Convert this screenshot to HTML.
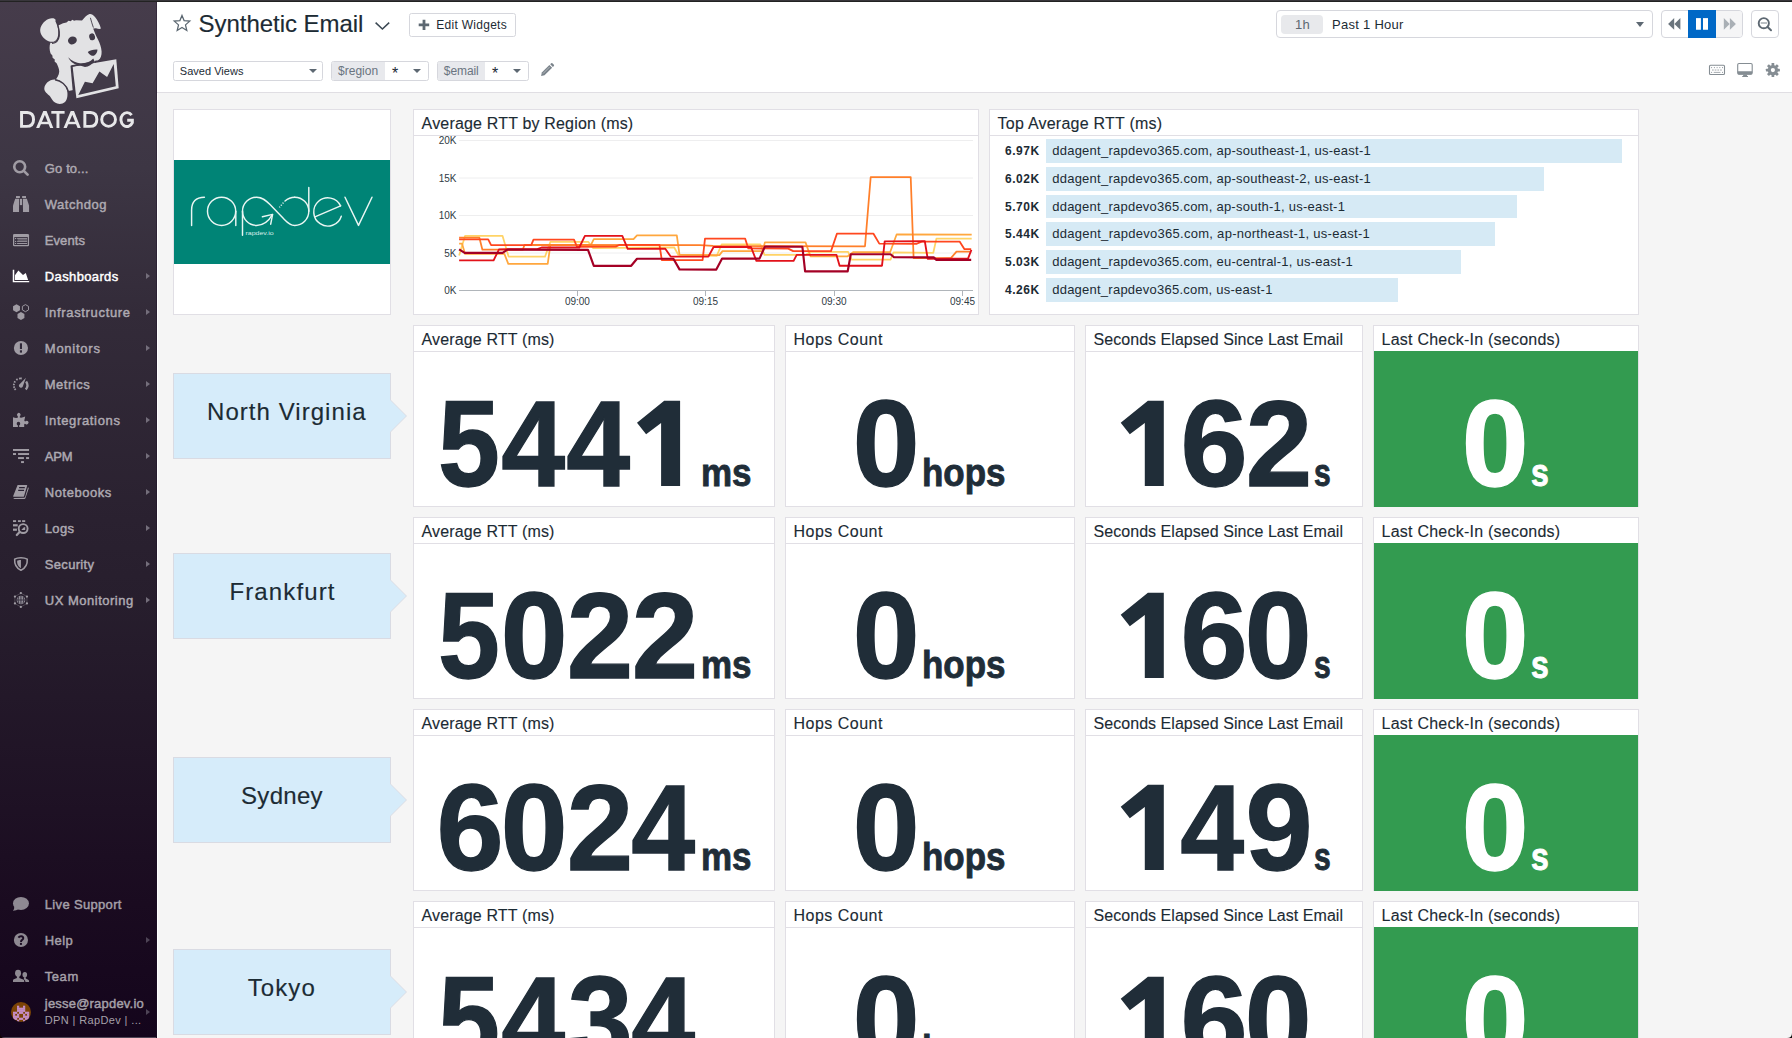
<!DOCTYPE html>
<html>
<head>
<meta charset="utf-8">
<title>Synthetic Email</title>
<style>
*{box-sizing:border-box;margin:0;padding:0}
html,body{width:1792px;height:1038px;overflow:hidden;background:#f5f5f5;font-family:"Liberation Sans",sans-serif;color:#1c2b34}
.abs{position:absolute}
.t{position:absolute;white-space:nowrap}
#strip{position:absolute;left:0;top:0;width:1792px;height:2px;background:linear-gradient(#38363b 0,#38363b 50%,#222 50%,#222 100%);z-index:10}
#side{position:absolute;left:0;top:2px;width:157px;height:1036px;background:linear-gradient(180deg,#463c4b 0%,#3d3644 16%,#332b39 30%,#2a2130 50%,#271e2d 58%,#1a0b20 87%,#14051c 100%);border-right:1px solid rgba(30,15,40,.4);overflow:hidden}
#hdr{position:absolute;left:157px;top:2px;width:1635px;height:91px;background:#fff;border-bottom:1px solid #e0dee3}
#ddtxt{left:19px;top:106px;font-size:23.4px;line-height:24px;font-weight:700;color:#e6e6e8;letter-spacing:-.75px;white-space:nowrap;transform:scaleX(1.057);transform-origin:0 0}
.nav{position:absolute;left:44.8px;font-size:13px;font-weight:400;-webkit-text-stroke:.45px currentColor;color:#aeaab2;white-space:nowrap;line-height:16px}
.nav.on{color:#fff}
.nav.lo{color:#a5a0a9}
.car{position:absolute;left:146px;width:0;height:0;border-left:4.2px solid #746e7b;border-top:3.2px solid transparent;border-bottom:3.2px solid transparent}
.car.lo{border-left-color:#4e4456}
.btn{background:#fff;border:1px solid #d6d7dd;border-radius:2.5px}
.tag{position:absolute;left:0;top:0;height:18px;background:#e8e9ed;border-radius:2px 0 0 2px}
.dd{position:absolute;width:0;height:0;border-left:4px solid transparent;border-right:4px solid transparent;border-top:4.6px solid #5d6872}
.w{position:absolute;background:#fff;border:1px solid #e1dfe5}
.tb{height:1px;background:#e1dfe5}
.ax{font-size:10px;line-height:10px;color:#2f3b45}
.big{font-weight:700}
.note{position:absolute;left:173px;width:218px;height:86px;background:#d6ecfa;border:1px solid #d9dbe3}
.note:before{content:"";position:absolute;left:216px;top:24.7px;border-left:17.2px solid #dcdde4;border-top:17.2px solid transparent;border-bottom:17.2px solid transparent}
.note:after{content:"";position:absolute;left:216px;top:25.7px;border-left:16.2px solid #d6ecfa;border-top:16.2px solid transparent;border-bottom:16.2px solid transparent}
.dg{width:65.1px;text-align:center;font-size:119px;line-height:119px;transform:scale(.97,1.042);transform-origin:50% 84.65%}

</style>
</head>
<body>
<div id="strip"></div>
<div id="side">
<svg class="abs" style="left:30px;top:6px" width="100" height="100" viewBox="0 0 100 100">
<g fill="#e2e2e4">
<!-- left ear -->
<path d="M22.5 10.2C18 9.8 12.5 14 10.6 19.5C9.2 24 11.5 28.5 15.5 31.5C18.5 33.8 22.5 34.6 25 33C27.8 31 28.6 27 28.2 22.5C27.9 18 26.6 13.5 25.4 11.5C24.6 10.4 23.6 10.2 22.5 10.2Z"/>
<!-- head + neck + body -->
<path d="M28.3 17.5L33 15.2L36.5 14.4L38.5 12.8L40.5 13.2L42.5 11.8L44 12.8L46 12.2L52 12.6C54 10 56.5 7.2 59 6.2C61 5.6 63 6.6 65 9C67.5 12 70 16.5 70.9 20.6C70 21.4 68 21 66 20.2L63.2 20.4C64.5 24 66 27.5 68 31.5C69.8 35 71.3 39 71.6 43.5C71.8 47.5 70.6 50.6 68.5 52C67.5 52.6 66.3 52.7 65.5 52.5L64.5 54.8L41.5 57.8L43.6 82L38.2 83C37 78 33 73.5 26 71.2C28.5 68 29.8 64.5 29 61.5C28.4 59 27.6 57 26.6 55.2L24.6 53.6L24.8 51.4L22.6 49.8L22.4 47.6L20.6 45.6C19.4 42 19.2 38 20.4 34.8C24 35.6 27.6 33.4 29 29.5C30 26 29.4 21 28.3 17.5Z"/>
<!-- paw -->
<path d="M14.3 80.5C14.6 76 19 71.8 24.5 71.6C30 71.6 35.5 76 37 82C38 86.5 37.5 91.5 35 94C32.5 96.4 28 96.6 25 94.6C22.5 93 21.4 90.4 19.8 88C17.6 85.8 14.2 84 14.3 80.5Z"/>
<!-- frame -->
<path d="M42.6 58.7L86.3 51.2L88.7 80.3L46.4 90.2Z"/>
</g>
<g fill="#413a48">
<ellipse cx="42.4" cy="32.4" rx="4.5" ry="3.9" transform="rotate(-22 42.4 32.4)"/>
<ellipse cx="62.1" cy="28.8" rx="2.9" ry="3.5" transform="rotate(-12 62.1 28.8)"/>
<path d="M57.8 44C59.5 42.2 64 41.2 67.4 41.5C67.6 43.6 66.6 45.8 64.6 47.2C63 48.2 61.2 47.6 59.8 46.4C58.8 45.6 58.1 44.8 57.8 44Z"/>
<!-- mouth -->
<path d="M38.2 49.2C41.5 52.8 46 55 51 55.5C55.5 55.7 60 53.8 63.3 50.4L64.4 53C62 56.6 58.6 58.9 55 59.1L50 57.6C45 57.2 40.4 54 38.2 49.2Z"/>
<!-- mountains -->
<path d="M48.3 86.9L54.9 73.7L62.6 75.2L69.4 63.6L77.1 68.9L83.7 56L85.8 78.2Z"/>
</g>
<!-- creases -->
<path d="M60.4 9.8C61.2 13 62.4 16.8 63.4 19.6" stroke="#413a48" stroke-width=".9" fill="none"/>
<path d="M25.8 12.4C28 17 29.6 23 29.2 28C28.7 32 25.8 35 22 35.4" stroke="#413a48" stroke-width="1.3" fill="none"/>
<path d="M25 71.7C31 72.6 36.6 77 38.4 83.5" stroke="#413a48" stroke-width="1.4" fill="none"/>
<path d="M41.3 57.6L43.6 84" stroke="#413a48" stroke-width="1.6" fill="none"/>
<path d="M41.5 57.9L66 53.7" stroke="#413a48" stroke-width="1.5" fill="none"/>
</svg>
<svg class="abs" style="left:14px;top:102px" width="126" height="30" viewBox="0 0 126 30">
<defs><clipPath id="ddc"><rect x="0" y="6.89" width="126" height="17.02"/></clipPath></defs>
<g fill="none" stroke="#e7e7e9" stroke-width="2.95" clip-path="url(#ddc)">
<path d="M7.56 8.44V22.36H12.3C17.4 22.36 19.55 19.4 19.55 15.4C19.55 11.4 17.4 8.44 12.3 8.44Z"/>
<path d="M22.9 25.9L30.94 6.9L38.5 25.9" stroke-linejoin="miter" stroke-miterlimit="10"/>
<path d="M26.4 19H35.6" stroke-width="2.4"/>
<path d="M37.3 8.3H50.6" stroke-width="2.8"/>
<path d="M43.95 7V24"/>
<path d="M50.3 25.9L58.37 6.9L65.9 25.9" stroke-linejoin="miter" stroke-miterlimit="10"/>
<path d="M53.8 19H63" stroke-width="2.4"/>
<path d="M70.85 8.44V22.36H75.6C80.7 22.36 82.84 19.4 82.84 15.4C82.84 11.4 80.7 8.44 75.6 8.44Z"/>
<ellipse cx="94.59" cy="15.4" rx="6.89" ry="6.96"/>
<path d="M117.6 11.2A6 6.96 0 1 0 118.35 18.6V16.3H113.2" stroke-linejoin="miter"/>
</g></svg>

<svg class="abs" style="left:8px;top:154px" width="26" height="24" viewBox="0 0 26 24"><circle cx="11.7" cy="10.75" r="5.45" fill="none" stroke="#a09ca4" stroke-width="2.6"/><path d="M15.8 14.9L19.6 18.6" stroke="#a09ca4" stroke-width="2.7" stroke-linecap="round"/></svg>
<div class="nav" style="top:159px;letter-spacing:0.128px">Go to...</div>
<svg class="abs" style="left:8px;top:190px" width="26" height="24" viewBox="0 0 26 24"><g fill="#a09ca4"><rect x="8" y="4.05" width="3.9" height="1.95"/><rect x="14.1" y="4.05" width="3.9" height="1.95"/><path d="M7.2 6.7H11.1L11 20H5V13.6Z"/><path d="M14.9 6.7H18.85L21.05 13.6V20H15Z"/><rect x="11.9" y="6.9" width="2.2" height="6.2"/></g></svg>
<div class="nav" style="top:195px;letter-spacing:0.525px">Watchdog</div>
<svg class="abs" style="left:8px;top:226px" width="26" height="24" viewBox="0 0 26 24"><rect x="5" y="5.9" width="16.05" height="12.4" rx="1.3" fill="#a09ca4"/><rect x="6.25" y="9.1" width="13.55" height="7.9" fill="#37303f"/><g fill="#a09ca4"><rect x="7" y="10" width="1.2" height="1.1"/><rect x="7" y="12.9" width="1.2" height="1.1"/><rect x="7" y="15" width="1.2" height="1"/><rect x="9.1" y="10" width="10" height="1" opacity=".8"/><rect x="9.6" y="11" width="9.5" height="1.9" opacity=".45"/><rect x="9.1" y="12.9" width="10" height="1.1" opacity=".8"/><rect x="9.1" y="15" width="10" height="1" opacity=".95"/></g></svg>
<div class="nav" style="top:231px;letter-spacing:0.078px">Events</div>
<svg class="abs" style="left:8px;top:262px" width="26" height="24" viewBox="0 0 26 24"><g fill="#fff"><path d="M4.75 5.8H6.25V16.9H21.2V18.2H4.75Z"/><path d="M6.95 15.95V11.3L10.4 6.5L15 11.1L17.8 8.9L20.1 15.95Z"/></g></svg>
<div class="nav on" style="top:267px;letter-spacing:0.37px">Dashboards</div>
<div class="car" style="top:270.8px"></div>
<svg class="abs" style="left:8px;top:298px" width="26" height="24" viewBox="0 0 26 24"><polygon points="8.50,4.15 11.96,6.15 11.96,10.15 8.50,12.15 5.04,10.15 5.04,6.15" fill="#a09ca4"/><polygon points="12.95,11.95 16.41,13.95 16.41,17.95 12.95,19.95 9.49,17.95 9.49,13.95" fill="#a09ca4"/><polygon points="17.45,4.60 20.52,6.38 20.52,9.92 17.45,11.70 14.38,9.93 14.38,6.38" fill="none" stroke="#a09ca4" stroke-width="0.95"/></svg>
<div class="nav" style="top:303px;letter-spacing:0.665px">Infrastructure</div>
<div class="car" style="top:306.8px"></div>
<svg class="abs" style="left:8px;top:334px" width="26" height="24" viewBox="0 0 26 24"><circle cx="12.95" cy="12.03" r="7.05" fill="#a09ca4"/><rect x="11.9" y="7.3" width="2.1" height="5.7" fill="#2f2838"/><rect x="11.9" y="14.3" width="2.1" height="2.3" fill="#2f2838"/></svg>
<div class="nav" style="top:339px;letter-spacing:0.754px">Monitors</div>
<div class="car" style="top:342.8px"></div>
<svg class="abs" style="left:8px;top:370px" width="26" height="24" viewBox="0 0 26 24"><path d="M7.65 17.93A6.85 6.85 0 0 1 6.74 16.67M6.37 15.92A6.85 6.85 0 0 1 5.94 14.43M5.85 13.36A6.85 6.85 0 0 1 6.01 11.82M6.39 10.62A6.85 6.85 0 0 1 7.16 9.27M8.34 8.01A6.85 6.85 0 0 1 9.64 7.17M11.04 6.65A6.85 6.85 0 0 1 13.77 6.53" fill="none" stroke="#a09ca4" stroke-width="1.85"/><path d="M18.11 9.51A6.6 6.6 0 0 1 17.76 17.54" fill="none" stroke="#a09ca4" stroke-width="2.3"/><path d="M17.9 5.8L10.9 13.1A2.1 2.1 0 0 0 14.7 14.7Z" fill="#a09ca4"/></svg>
<div class="nav" style="top:375px;letter-spacing:0.492px">Metrics</div>
<div class="car" style="top:378.8px"></div>
<svg class="abs" style="left:8px;top:406px" width="26" height="24" viewBox="0 0 26 24"><path fill="#a09ca4" d="M5 9.2Q8 10.4 9.9 9.6Q10.4 9 9.5 8A1.8 1.8 0 1 1 12.1 8Q11.3 9 11.9 9.6Q14 10.2 17.2 8.6L16.3 12.6Q16.6 13.7 17.5 13.3A1.8 1.8 0 1 1 17.5 15.9Q16.5 15.5 16.2 16.4V19.1H11.2V17.3Q12.3 16.9 12.2 15.5A1.75 1.75 0 0 0 8.7 15.5Q8.6 16.9 9.9 17.4V19.1H5Z"/></svg>
<div class="nav" style="top:411px;letter-spacing:0.655px">Integrations</div>
<div class="car" style="top:414.8px"></div>
<svg class="abs" style="left:8px;top:442px" width="26" height="24" viewBox="0 0 26 24"><g fill="#a09ca4"><rect x="5" y="5" width="16.05" height="1.95"/><rect x="5" y="9.05" width="3" height="1.95"/><rect x="10.05" y="9.05" width="11" height="1.95"/><rect x="10.05" y="13.1" width="5.9" height="1.95"/><rect x="18.05" y="13.1" width="3" height="1.95"/><rect x="13.05" y="17.1" width="2.9" height="1.95"/></g></svg>
<div class="nav" style="top:447px;letter-spacing:-0.166px">APM</div>
<div class="car" style="top:450.8px"></div>
<svg class="abs" style="left:8px;top:478px" width="26" height="24" viewBox="0 0 26 24"><path fill="#a09ca4" d="M9.6 4.95H18.6Q19.4 4.95 19.15 5.8L16 16.2Q15.8 16.7 15.2 16.7H5.6Q4.9 16.7 5.2 16Z"/><path d="M11.1 7.65H16.8M10.2 10.4H16" stroke="#2a2233" stroke-width="1.1"/><path d="M5.4 17.9Q5.6 18.9 6.8 18.9H16.3Q17.2 18.9 17.5 18L20.7 8.4Q20.9 7.5 20 7.2L17.1 17Q16.8 17.8 16 17.8Z" fill="#a09ca4"/></svg>
<div class="nav" style="top:483px;letter-spacing:0.535px">Notebooks</div>
<div class="car" style="top:486.8px"></div>
<svg class="abs" style="left:8px;top:514px" width="26" height="24" viewBox="0 0 26 24"><g fill="#a09ca4"><rect x="5" y="4.2" width="3.1" height="1.85"/><rect x="9.95" y="4.2" width="2.9" height="1.85"/><rect x="14.1" y="4.2" width="3.1" height="1.85"/><rect x="5" y="8.2" width="4.7" height="2.2"/><rect x="5" y="12.6" width="3.9" height="2.2"/><path d="M13.3 13.9L15.6 11.6L17.2 11.1V13.9Z"/></g><circle cx="15.15" cy="12.6" r="4.45" fill="none" stroke="#a09ca4" stroke-width="1.9"/><path d="M11.6 16L8.8 19" stroke="#a09ca4" stroke-width="2.2" stroke-linecap="round"/></svg>
<div class="nav" style="top:519px;letter-spacing:0.312px">Logs</div>
<div class="car" style="top:522.8px"></div>
<svg class="abs" style="left:8px;top:550px" width="26" height="24" viewBox="0 0 26 24"><path d="M12.95 5.8C15.5 5.8 17.7 6.3 19.25 7.2C19.5 11.2 18.6 15.5 12.95 18.3C7.3 15.5 6.4 11.2 6.65 7.2C8.2 6.3 10.4 5.8 12.95 5.8Z" fill="none" stroke="#a09ca4" stroke-width="1.55" stroke-linejoin="round"/><path d="M12.95 7.9C11.2 7.9 10 8.2 9.1 8.7C9 11.6 9.8 14.4 12.95 16.3Z" fill="#a09ca4"/></svg>
<div class="nav" style="top:555px;letter-spacing:0.31px">Security</div>
<div class="car" style="top:558.8px"></div>
<svg class="abs" style="left:8px;top:586px" width="26" height="24" viewBox="0 0 26 24"><polygon points="12.90,5.08 18.92,8.55 18.92,15.50 12.90,18.98 6.88,15.51 6.88,8.55" fill="none" stroke="#a09ca4" stroke-width=".7" opacity=".45"/><circle cx="12.95" cy="12.03" r="4.3" fill="#a09ca4" opacity=".9"/><path d="M8.7 12.03H17.2M12.95 7.8V16.3M10.6 8.6Q9.3 12 10.8 15.6M15.2 8.5Q16.6 12 15 15.7" stroke="#2a2233" stroke-width=".8" fill="none"/><circle cx="12.85" cy="5.1" r="1.15" fill="#a09ca4"/><circle cx="12.85" cy="18.95" r="1.15" fill="#a09ca4"/><circle cx="6.95" cy="8.56" r="1.15" fill="#a09ca4"/><circle cx="18.95" cy="8.56" r="1.15" fill="#a09ca4"/><circle cx="6.95" cy="15.4" r="1.15" fill="#a09ca4"/><circle cx="18.95" cy="15.4" r="1.15" fill="#a09ca4"/></svg>
<div class="nav" style="top:591px;letter-spacing:0.505px">UX Monitoring</div>
<div class="car" style="top:594.8px"></div>
<svg class="abs" style="left:8px;top:890px" width="26" height="24" viewBox="0 0 26 24"><ellipse cx="12.95" cy="11.45" rx="8" ry="6.5" fill="#8e8992"/><path d="M6.3 14.2Q6.5 17.2 4.9 18.8Q8.5 18.8 10.8 17Z" fill="#8e8992"/></svg>
<div class="nav lo" style="top:895px;letter-spacing:0.331px">Live Support</div>
<svg class="abs" style="left:8px;top:926px" width="26" height="24" viewBox="0 0 26 24"><circle cx="12.95" cy="12.03" r="7.05" fill="#8e8992"/><path d="M10.4 9.6Q11.4 8.1 13.2 8.2Q15.3 8.5 15.3 10.2Q15.2 11.4 13.9 12.1Q13 12.7 13 13.9" fill="none" stroke="#1a0b22" stroke-width="1.9"/><circle cx="12.95" cy="15.9" r="1.15" fill="#1a0b22"/></svg>
<div class="nav lo" style="top:931px;letter-spacing:0.43px">Help</div>
<div class="car lo" style="top:934.8px"></div>
<svg class="abs" style="left:8px;top:962px" width="26" height="24" viewBox="0 0 26 24"><g fill="#8e8992"><ellipse cx="10.06" cy="9.25" rx="3" ry="3.4"/><path d="M5 18V16.2Q5 15.3 6.4 14.9L8.9 14.1V12H11.3V14.1L15.2 15.6Q16.2 16 16.2 17V18Z"/><ellipse cx="16.8" cy="10.8" rx="2.3" ry="2.75"/><path d="M15.9 13.2H17.8V14.6L20.2 15.7Q21.05 16.1 21.05 17V18H17.5Q17.3 16.2 15.9 15.2Z"/></g></svg>
<div class="nav lo" style="top:967px;letter-spacing:0.548px">Team</div>
<svg class="abs" style="left:11px;top:1000px" width="20" height="20" viewBox="0 0 20 20"><defs><clipPath id="avc"><circle cx="10" cy="10" r="10"/></clipPath></defs><g clip-path="url(#avc)"><rect width="20" height="20" fill="#7b4305"/><rect x="6" y="3.7" width="2.2" height="2.2" fill="#c48dc6"/><rect x="12" y="3.7" width="2.2" height="2.2" fill="#c48dc6"/><rect x="6" y="5.7" width="2.2" height="2.2" fill="#c48dc6"/><rect x="8" y="5.7" width="2.2" height="2.2" fill="#c48dc6"/><rect x="10" y="5.7" width="2.2" height="2.2" fill="#c48dc6"/><rect x="12" y="5.7" width="2.2" height="2.2" fill="#c48dc6"/><rect x="6" y="7.7" width="2.2" height="2.2" fill="#c48dc6"/><rect x="8" y="7.7" width="2.2" height="2.2" fill="#c48dc6"/><rect x="10" y="7.7" width="2.2" height="2.2" fill="#c48dc6"/><rect x="12" y="7.7" width="2.2" height="2.2" fill="#c48dc6"/><rect x="2" y="9.7" width="2.2" height="2.2" fill="#c48dc6"/><rect x="4" y="9.7" width="2.2" height="2.2" fill="#c48dc6"/><rect x="8" y="9.7" width="2.2" height="2.2" fill="#c48dc6"/><rect x="10" y="9.7" width="2.2" height="2.2" fill="#c48dc6"/><rect x="14" y="9.7" width="2.2" height="2.2" fill="#c48dc6"/><rect x="16" y="9.7" width="2.2" height="2.2" fill="#c48dc6"/><rect x="2" y="11.7" width="2.2" height="2.2" fill="#c48dc6"/><rect x="6" y="11.7" width="2.2" height="2.2" fill="#c48dc6"/><rect x="12" y="11.7" width="2.2" height="2.2" fill="#c48dc6"/><rect x="16" y="11.7" width="2.2" height="2.2" fill="#c48dc6"/><rect x="2" y="13.7" width="2.2" height="2.2" fill="#c48dc6"/><rect x="4" y="13.7" width="2.2" height="2.2" fill="#c48dc6"/><rect x="6" y="13.7" width="2.2" height="2.2" fill="#c48dc6"/><rect x="12" y="13.7" width="2.2" height="2.2" fill="#c48dc6"/><rect x="14" y="13.7" width="2.2" height="2.2" fill="#c48dc6"/><rect x="16" y="13.7" width="2.2" height="2.2" fill="#c48dc6"/><rect x="2" y="15.7" width="2.2" height="2.2" fill="#c48dc6"/><rect x="4" y="15.7" width="2.2" height="2.2" fill="#c48dc6"/><rect x="8" y="15.7" width="2.2" height="2.2" fill="#c48dc6"/><rect x="10" y="15.7" width="2.2" height="2.2" fill="#c48dc6"/><rect x="14" y="15.7" width="2.2" height="2.2" fill="#c48dc6"/><rect x="16" y="15.7" width="2.2" height="2.2" fill="#c48dc6"/><rect x="6" y="17.7" width="2.2" height="2.2" fill="#c48dc6"/><rect x="12" y="17.7" width="2.2" height="2.2" fill="#c48dc6"/></g></svg>
<div class="nav lo" style="top:994px;letter-spacing:0.206px">jesse@rapdev.io</div>
<div class="nav lo" style="top:1010px;font-size:11px;font-weight:400;-webkit-text-stroke:0;letter-spacing:0.371px">DPN | RapDev | ...</div>
<div class="car lo" style="top:1006.8px"></div>
<div class="abs" style="left:0;top:1035px;width:156px;height:1px;background:#4f4656"></div>
</div>
<svg class="abs" style="left:0;top:1033px;z-index:5" width="5" height="5" viewBox="0 0 5 5"><path d="M0 0Q0 5 5 5H0Z" fill="#120404"/></svg><svg class="abs" style="left:1787px;top:1033px;z-index:5" width="5" height="5" viewBox="0 0 5 5"><path d="M5 0Q5 5 0 5H5Z" fill="#111"/></svg>
<div id="hdr"></div><div class="abs" style="left:157px;top:93px;width:1px;height:945px;background:#fff"></div>
<svg class="abs" style="left:172px;top:13px" width="20" height="20" viewBox="0 0 20 20"><path d="M10 2.4L12.1 7.6L17.8 8.1L13.5 11.9L14.8 17.5L10 14.5L5.2 17.5L6.5 11.9L2.2 8.1L7.9 7.6Z" fill="none" stroke="#5a6670" stroke-width="1.25" stroke-linejoin="miter"/></svg>
<div class="t " style="left:198.5px;top:12px;font-size:24px;line-height:24px;color:#1c2b34;letter-spacing:-0.035px;-webkit-text-stroke:.15px #1c2b34;">Synthetic Email</div>
<svg class="abs" style="left:374px;top:21px" width="17" height="10" viewBox="0 0 17 10"><path d="M1.6 1.6L8.4 8L15.2 1.6" fill="none" stroke="#3b4853" stroke-width="1.5"/></svg>
<div class="abs btn" style="left:409px;top:13px;width:107px;height:24px"></div>
<svg class="abs" style="left:418px;top:19px" width="12" height="12" viewBox="0 0 12 12"><path d="M6 .7V11.1M.7 5.9H11.2" stroke="#5d6872" stroke-width="2.8"/></svg>
<div class="t " style="left:436.2px;top:19px;font-size:12px;line-height:12px;color:#1c2b34;letter-spacing:0.291px;">Edit Widgets</div>
<div class="abs btn" style="left:173px;top:61px;width:150px;height:20px"></div>
<div class="t " style="left:179.8px;top:66px;font-size:11px;line-height:11px;color:#1c2b34;letter-spacing:0.019px;">Saved Views</div>
<div class="dd" style="left:309px;top:69px"></div>
<div class="abs btn" style="left:331px;top:61px;width:98px;height:20px"><div class="tag" style="width:53px"></div></div>
<div class="t " style="left:338px;top:65px;font-size:12px;line-height:12px;color:#6a7480;letter-spacing:0.021px;">$region</div>
<div class="t " style="left:392px;top:66px;font-size:16px;line-height:16px;color:#1c2b34;">*</div>
<div class="dd" style="left:413px;top:69px"></div>
<div class="abs btn" style="left:437px;top:61px;width:92px;height:20px"><div class="tag" style="width:47px"></div></div>
<div class="t " style="left:443.8px;top:65px;font-size:12px;line-height:12px;color:#6a7480;letter-spacing:-0.08px;">$email</div>
<div class="t " style="left:492px;top:66px;font-size:16px;line-height:16px;color:#1c2b34;">*</div>
<div class="dd" style="left:513px;top:69px"></div>
<svg class="abs" style="left:540px;top:62px" width="15" height="15" viewBox="0 0 15 15"><g fill="#7a838b"><path d="M1.1 14L1.8 10.6L9.4 3L12.1 5.7L4.5 13.3Z"/><path d="M10.2 2.2L11.2 1.2Q11.8 .8 12.4 1.2L13.9 2.7Q14.3 3.3 13.9 3.9L12.9 4.9Z"/></g><path d="M3 11.6L9.6 5" stroke="#fff" stroke-width=".7" opacity=".6"/></svg>
<div class="abs btn" style="left:1276px;top:10px;width:377px;height:28px;border-radius:4px"></div>
<div class="abs" style="left:1281px;top:15px;width:42px;height:19px;border-radius:4px;background:#e8e9ec"></div>
<div class="t " style="left:1295px;top:18px;font-size:13px;line-height:13px;color:#5d6872;letter-spacing:0.371px;">1h</div>
<div class="t " style="left:1332px;top:18px;font-size:13px;line-height:13px;color:#1c2b34;letter-spacing:0.278px;">Past 1 Hour</div>
<div class="dd" style="left:1635.5px;top:21.5px;border-left-width:4.8px;border-right-width:4.8px;border-top-width:5.6px"></div>
<div class="abs btn" style="left:1661px;top:10px;width:82px;height:28px;border-radius:4px;overflow:hidden"><div class="abs" style="left:54px;top:0;width:27px;height:26px;background:#f5f5f6"></div></div>
<div class="abs" style="left:1688px;top:10px;width:28px;height:28px;background:#0068c6"></div>
<svg class="abs" style="left:1661px;top:10px" width="82" height="28" viewBox="0 0 82 28"><g fill="#6a747d"><path d="M7.1 13.9L13.2 8.1V19.75Z"/><path d="M13.4 13.9L19.4 8.1V19.75Z"/></g><g fill="#fff"><rect x="35" y="8.1" width="4.9" height="11.65"/><rect x="42" y="8.1" width="5" height="11.65"/></g><g fill="#a9afb5"><path d="M68.7 13.9L62.8 8.1V19.75Z"/><path d="M74.9 13.9L68.9 8.1V19.75Z"/></g></svg>
<div class="abs btn" style="left:1751px;top:10px;width:28px;height:28px;border-radius:4px"></div>
<svg class="abs" style="left:1751px;top:10px" width="28" height="28" viewBox="0 0 28 28"><circle cx="12.8" cy="13.2" r="5.1" fill="none" stroke="#5d6872" stroke-width="1.9"/><path d="M16.6 17L20 20.2" stroke="#5d6872" stroke-width="2" stroke-linecap="round"/><path d="M9.7 13H16" stroke="#a5abb1" stroke-width="1.5"/></svg>
<svg class="abs" style="left:1706px;top:60px" width="22" height="20" viewBox="0 0 22 20"><rect x="3.5" y="5.3" width="15" height="9.2" rx="1" fill="none" stroke="#858d93" stroke-width="1.1"/><g fill="#858d93"><rect x="5.1" y="7.2" width="1" height=".9"/><rect x="7.9" y="7.2" width="1" height=".9"/><rect x="10.6" y="7.2" width="1" height=".9"/><rect x="13.3" y="7.2" width="1" height=".9"/><rect x="16" y="7.2" width="1" height=".9"/><g opacity=".45"><rect x="6" y="9.2" width="1.7" height="1.7"/><rect x="8.7" y="9.2" width="1.7" height="1.7"/><rect x="11.4" y="9.2" width="1.7" height="1.7"/><rect x="14.1" y="9.2" width="1.7" height="1.7"/></g><rect x="5.1" y="11.9" width="1" height=".9"/><rect x="7.7" y="11.9" width="6.7" height=".9" opacity=".8"/><rect x="16" y="11.9" width="1" height=".9"/></g></svg>
<svg class="abs" style="left:1735px;top:60px" width="20" height="20" viewBox="0 0 20 20"><rect x="2.7" y="3.5" width="14.5" height="10.6" rx="1.3" fill="none" stroke="#858d93" stroke-width="1.1"/><path d="M2.7 11.3H17.2V13Q17.2 14.6 15.9 14.6H4Q2.7 14.6 2.7 13Z" fill="#858d93"/><path d="M8.6 14.5H11.6L12.3 16.1H13V16.9H7.2V16.1H7.9Z" fill="#858d93"/></svg>
<svg class="abs" style="left:1763px;top:60px" width="20" height="20" viewBox="0 0 20 20"><g transform="translate(9.9 10.1)" fill="#858d93"><rect x="-1.35" y="-7" width="2.7" height="3" rx=".4" transform="rotate(0)"/><rect x="-1.35" y="-7" width="2.7" height="3" rx=".4" transform="rotate(45)"/><rect x="-1.35" y="-7" width="2.7" height="3" rx=".4" transform="rotate(90)"/><rect x="-1.35" y="-7" width="2.7" height="3" rx=".4" transform="rotate(135)"/><rect x="-1.35" y="-7" width="2.7" height="3" rx=".4" transform="rotate(180)"/><rect x="-1.35" y="-7" width="2.7" height="3" rx=".4" transform="rotate(225)"/><rect x="-1.35" y="-7" width="2.7" height="3" rx=".4" transform="rotate(270)"/><rect x="-1.35" y="-7" width="2.7" height="3" rx=".4" transform="rotate(315)"/><path fill-rule="evenodd" d="M0 -5.2A5.2 5.2 0 1 0 0 5.2A5.2 5.2 0 1 0 0 -5.2ZM0 -2.1A2.1 2.1 0 1 1 0 2.1A2.1 2.1 0 1 1 0 -2.1Z"/></g></svg>
<div class="w" style="left:173px;top:109px;width:218px;height:206px"></div>
<div class="abs" style="left:174px;top:160px;width:216px;height:104px;background:#008476"></div>
<svg class="abs" style="left:174px;top:160px" width="216" height="104" viewBox="0 0 216 104"><g fill="none" stroke="#eaf6f3" stroke-width="1.45" stroke-linecap="round" stroke-linejoin="round">
<path d="M17.6 65.4V50Q17.6 37.4 30.4 37.2"/>
<circle cx="47.6" cy="51.3" r="14.1"/><path d="M61.8 51.3V65.4"/>
<path d="M68.5 75.3V51.3A14.1 14.1 0 0 1 82.6 37.2C88.5 37.2 92 40.5 96 44.6L109 58C112.5 61.6 115.5 65.4 120.7 65.4A14.1 14.1 0 0 0 134.8 51.3V27.4"/>
<path d="M68.5 51.3A14.1 14.1 0 0 0 82.6 65.4C89.5 65.4 95 60.5 98.4 54.6"/>
<path d="M88.4 56.8L98.6 54.4L96.7 64.2"/>
<path d="M120.7 37.2A14.1 14.1 0 0 1 134.8 51.3"/>
<path d="M120.7 37.2C116.5 37.2 113.5 38.8 111 41"/>
<path d="M109.4 42.6L105.4 47.4" stroke-dasharray="1.2 1.5" stroke-linecap="butt"/>
<path d="M166.6 45.9A14.1 14.1 0 1 0 167.3 56.2"/><path d="M140.9 56.8L166.6 45.9"/>
<path d="M171 37.2L184.5 65.4L198 37.2"/>
</g><text x="71.4" y="75.4" font-family="Liberation Sans" font-size="5.6" fill="#d9eeea" textLength="28.4" lengthAdjust="spacingAndGlyphs">rapdev.io</text></svg>
<div class="w" style="left:413px;top:109px;width:566px;height:206px"></div>
<div class="abs tb" style="left:414px;top:135px;width:564px"></div>
<div class="t " style="left:421.6px;top:116px;font-size:16px;line-height:16px;color:#1c2b34;letter-spacing:0.175px;-webkit-text-stroke:.12px #1c2b34;">Average RTT by Region (ms)</div>
<div class="w" style="left:989px;top:109px;width:650px;height:206px"></div>
<div class="abs tb" style="left:990px;top:135px;width:648px"></div>
<div class="t " style="left:997.6px;top:116px;font-size:16px;line-height:16px;color:#1c2b34;letter-spacing:0.232px;-webkit-text-stroke:.12px #1c2b34;">Top Average RTT (ms)</div>
<svg class="abs" style="left:413px;top:109px" width="566" height="206" viewBox="413 109 566 206">
<path d="M459 140.5H973" stroke="#eeeeef" stroke-width="1"/>
<path d="M459 178H973" stroke="#eeeeef" stroke-width="1"/>
<path d="M459 215.5H973" stroke="#eeeeef" stroke-width="1"/>
<path d="M459 253H973" stroke="#eeeeef" stroke-width="1"/>
<path d="M459 290.5H973" stroke="#b0b5ba" stroke-width="1"/>
<path d="M577.5 290V296" stroke="#b0b5ba" stroke-width="1"/>
<path d="M705.5 290V296" stroke="#b0b5ba" stroke-width="1"/>
<path d="M834.5 290V296" stroke="#b0b5ba" stroke-width="1"/>
<path d="M962.5 290V296" stroke="#b0b5ba" stroke-width="1"/>
<path d="M459.1 255.4L465.1 235.8L502.5 235.8L508.6 256.6L545 256.6L550.4 241.9L588.4 241.9L593 248.1L640 247.6L674.1 247.3L678.4 255L716.7 255.9L721.7 244.3L760.3 244.3L764.5 254.9L805.5 254.9L810.5 251.8L848.1 251.8L851.6 259.6L890.5 259.6L893.6 252.4L933.3 252.8L936.4 238.7L971.7 238.7" fill="none" stroke="#ffd366" stroke-width="1.75" stroke-linejoin="round"/>
<path d="M459.1 243.5L462 243.5L465.1 253.9L504.4 253.9L508.3 263.9L547.7 263.9L550.4 245L591.1 244.6L593.8 239.2L633.5 239.2L637 235.4L676.8 235.4L679.5 254.7L719.4 255.1L722.5 251.1L762.6 251.1L764.9 242.4L805.5 242.4L810.5 256.3L847.7 256.3L853.1 252.2L890.1 252.2L896.7 234.3L971.7 234.5" fill="none" stroke="#ffa73e" stroke-width="1.75" stroke-linejoin="round"/>
<path d="M459.1 237.7L479.4 237.7L482.4 249.7L522.7 249.7L524.6 244.8L700 245.2L713 245.9L865 246.3L870.7 177L910.7 177L913.6 258L951.1 257.9L956.5 251.6L970.5 251.6" fill="none" stroke="#ff7f2a" stroke-width="1.75" stroke-linejoin="round"/>
<path d="M459.1 239.4L488.2 239.4L491.1 245.2L531.2 245.2L533.5 239.6L574 239.6L577 246.8L615.8 246.6L619.6 244.8L659.5 244.8L661.8 260.1L702.6 260.1L705 238.7L745.2 238.7L748.3 248.4L788.2 248.6L793.2 251.1L831 251.1L836.9 233.7L873.5 233.7L879.3 243.6L916.75 243.8L921.7 241.6L959.6 241.6L964.5 249.2L971.2 249.2" fill="none" stroke="#ff471f" stroke-width="1.8" stroke-linejoin="round"/>
<path d="M459.1 260.4L493.6 260.4L499 249.3L537.3 249.1L541.6 247.5L579.3 247.5L584.9 235.8L622.3 235.8L627.7 248.9L665.3 248.7L670.7 256.6L708.4 256.6L713.6 247L751 247L756.4 260.9L793.6 260.9L796.7 254.9L836.5 254.9L839.6 265.7L882 265.7L884.7 241.4L924.8 241.2L927.7 258.8L968.1 258.3L971.4 249.9" fill="none" stroke="#e2121a" stroke-width="1.85" stroke-linejoin="round"/>
<path d="M459.1 249.3L464.7 252.9L502.5 252.9L507.5 249.6L588 249.8L593.8 265.8L631.2 265.8L637 258.7L673.4 258.7L679.5 269.4L716.3 269.6L722.1 258.6L759.5 258.6L764.9 246.6L802.4 246.8L805.1 271.3L847.7 271.3L850.8 254.2L890.5 254.2L894 257.2L933.7 257.4L936.4 259.9L971.2 259.9" fill="none" stroke="#a40025" stroke-width="2.15" stroke-linejoin="round"/>
</svg>
<div class="t ax" style="left:426px;width:30.5px;text-align:right;top:136px">20K</div>
<div class="t ax" style="left:426px;width:30.5px;text-align:right;top:174px">15K</div>
<div class="t ax" style="left:426px;width:30.5px;text-align:right;top:211px">10K</div>
<div class="t ax" style="left:426px;width:30.5px;text-align:right;top:249px">5K</div>
<div class="t ax" style="left:426px;width:30.5px;text-align:right;top:286px">0K</div>
<div class="t ax" style="left:557.4px;width:40px;text-align:center;top:297px">09:00</div>
<div class="t ax" style="left:685.5px;width:40px;text-align:center;top:297px">09:15</div>
<div class="t ax" style="left:814px;width:40px;text-align:center;top:297px">09:30</div>
<div class="t ax" style="left:942.5px;width:40px;text-align:center;top:297px">09:45</div>
<div class="abs" style="left:1046px;top:139.20px;width:576.2px;height:23.6px;background:#d6eaf5"></div>
<div class="t " style="left:1005px;top:145px;font-size:12px;line-height:12px;font-weight:700;color:#1c2b34;letter-spacing:0.557px;">6.97K</div>
<div class="t " style="left:1052.2px;top:144px;font-size:13px;line-height:13px;color:#1c2b34;letter-spacing:0.252px;">ddagent_rapdevo365.com, ap-southeast-1, us-east-1</div>
<div class="abs" style="left:1046px;top:166.95px;width:498.1px;height:23.6px;background:#d6eaf5"></div>
<div class="t " style="left:1005px;top:173px;font-size:12px;line-height:12px;font-weight:700;color:#1c2b34;letter-spacing:0.557px;">6.02K</div>
<div class="t " style="left:1052.2px;top:172px;font-size:13px;line-height:13px;color:#1c2b34;letter-spacing:0.252px;">ddagent_rapdevo365.com, ap-southeast-2, us-east-1</div>
<div class="abs" style="left:1046px;top:194.70px;width:470.9px;height:23.6px;background:#d6eaf5"></div>
<div class="t " style="left:1005px;top:201px;font-size:12px;line-height:12px;font-weight:700;color:#1c2b34;letter-spacing:0.557px;">5.70K</div>
<div class="t " style="left:1052.2px;top:200px;font-size:13px;line-height:13px;color:#1c2b34;letter-spacing:0.247px;">ddagent_rapdevo365.com, ap-south-1, us-east-1</div>
<div class="abs" style="left:1046px;top:222.45px;width:449.3px;height:23.6px;background:#d6eaf5"></div>
<div class="t " style="left:1005px;top:228px;font-size:12px;line-height:12px;font-weight:700;color:#1c2b34;letter-spacing:0.557px;">5.44K</div>
<div class="t " style="left:1052.2px;top:227px;font-size:13px;line-height:13px;color:#1c2b34;letter-spacing:0.277px;">ddagent_rapdevo365.com, ap-northeast-1, us-east-1</div>
<div class="abs" style="left:1046px;top:250.20px;width:415.2px;height:23.6px;background:#d6eaf5"></div>
<div class="t " style="left:1005px;top:256px;font-size:12px;line-height:12px;font-weight:700;color:#1c2b34;letter-spacing:0.557px;">5.03K</div>
<div class="t " style="left:1052.2px;top:255px;font-size:13px;line-height:13px;color:#1c2b34;letter-spacing:0.249px;">ddagent_rapdevo365.com, eu-central-1, us-east-1</div>
<div class="abs" style="left:1046px;top:277.95px;width:352.0px;height:23.6px;background:#d6eaf5"></div>
<div class="t " style="left:1005px;top:284px;font-size:12px;line-height:12px;font-weight:700;color:#1c2b34;letter-spacing:0.557px;">4.26K</div>
<div class="t " style="left:1052.2px;top:283px;font-size:13px;line-height:13px;color:#1c2b34;letter-spacing:0.242px;">ddagent_rapdevo365.com, us-east-1</div>
<div class="note" style="top:373px"></div>
<div class="t " style="left:207.0px;top:400px;font-size:24px;line-height:24px;color:#1c2b34;letter-spacing:1.05px;-webkit-text-stroke:.15px #1c2b34;">North Virginia</div>
<div class="w" style="left:413px;top:325px;width:362px;height:182px"></div>
<div class="abs tb" style="left:414px;top:351px;width:360px"></div>
<div class="t " style="left:421.6px;top:332px;font-size:16px;line-height:16px;color:#1c2b34;letter-spacing:0.138px;-webkit-text-stroke:.12px #1c2b34;">Average RTT (ms)</div>
<div class="t big dg" style="left:435.8px;top:385px;color:#202d38;-webkit-text-stroke:1.3px #202d38;transform:scale(0.935,1.028)">5</div><div class="t big dg" style="left:499.9px;top:385px;color:#202d38;-webkit-text-stroke:1.3px #202d38;transform:scale(0.965,1.028)">4</div><div class="t big dg" style="left:565.0px;top:385px;color:#202d38;-webkit-text-stroke:1.3px #202d38;transform:scale(0.965,1.028)">4</div><svg class="abs" style="left:0;top:0;overflow:visible" width="1" height="1"><polygon points="680.1,400.8 680.1,486.0 661.1,486.0 661.1,423.1 646.1,434.2 637.0,422.8 664.2,400.8" fill="#202d38"/></svg>
<div class="t big" style="left:700.6px;top:457px;font-size:35.5px;line-height:35.5px;color:#202d38;-webkit-text-stroke:.8px #202d38;transform:scale(0.985,1.115);transform-origin:0 29px">ms</div>
<div class="w" style="left:785px;top:325px;width:290px;height:182px"></div>
<div class="abs tb" style="left:786px;top:351px;width:288px"></div>
<div class="t " style="left:793.6px;top:332px;font-size:16px;line-height:16px;color:#1c2b34;letter-spacing:0.476px;-webkit-text-stroke:.12px #1c2b34;">Hops Count</div>
<div class="t big dg" style="left:852.5px;top:385px;color:#202d38;-webkit-text-stroke:1.3px #202d38;transform:scale(1.01,1.028)">0</div>
<div class="t big" style="left:921.6px;top:457px;font-size:35.5px;line-height:35.5px;color:#202d38;-webkit-text-stroke:.8px #202d38;transform:scale(0.985,1.115);transform-origin:0 29px">hops</div>
<div class="w" style="left:1085px;top:325px;width:278px;height:182px"></div>
<div class="abs tb" style="left:1086px;top:351px;width:276px"></div>
<div class="t " style="left:1093.6px;top:332px;font-size:16px;line-height:16px;color:#1c2b34;letter-spacing:0.04px;-webkit-text-stroke:.12px #1c2b34;">Seconds Elapsed Since Last Email</div>
<svg class="abs" style="left:0;top:0;overflow:visible" width="1" height="1"><polygon points="1163.8,400.8 1163.8,486.0 1144.8,486.0 1144.8,423.1 1129.8,434.2 1120.7,422.8 1147.9,400.8" fill="#202d38"/></svg><div class="t big dg" style="left:1180.9px;top:385px;color:#202d38;-webkit-text-stroke:1.3px #202d38;transform:scale(1.015,1.028)">6</div><div class="t big dg" style="left:1245.7px;top:385px;color:#202d38;-webkit-text-stroke:1.3px #202d38;transform:scale(1.005,1.028)">2</div>
<div class="t big" style="left:1314.2px;top:457px;font-size:34px;line-height:34px;color:#202d38;-webkit-text-stroke:.8px #202d38;transform:scale(0.885,1.16);transform-origin:0 29px">s</div>
<div class="w" style="left:1373px;top:325px;width:266px;height:182px"></div>
<div class="abs" style="left:1374px;top:351px;width:264px;height:156px;background:#339b50"></div>
<div class="t " style="left:1381.6px;top:332px;font-size:16px;line-height:16px;color:#1c2b34;letter-spacing:0.231px;-webkit-text-stroke:.12px #1c2b34;">Last Check-In (seconds)</div>
<div class="t big dg" style="left:1461.8px;top:385px;color:#fff;-webkit-text-stroke:1.3px #fff;transform:scale(1.01,1.028)">0</div>
<div class="t big" style="left:1531.2px;top:457px;font-size:34px;line-height:34px;color:#fff;-webkit-text-stroke:.8px #fff;transform:scale(0.94,1.16);transform-origin:0 29px">s</div>
<div class="note" style="top:553px"></div>
<div class="t " style="left:229.5px;top:580px;font-size:24px;line-height:24px;color:#1c2b34;letter-spacing:1.111px;-webkit-text-stroke:.15px #1c2b34;">Frankfurt</div>
<div class="w" style="left:413px;top:517px;width:362px;height:182px"></div>
<div class="abs tb" style="left:414px;top:543px;width:360px"></div>
<div class="t " style="left:421.6px;top:524px;font-size:16px;line-height:16px;color:#1c2b34;letter-spacing:0.138px;-webkit-text-stroke:.12px #1c2b34;">Average RTT (ms)</div>
<div class="t big dg" style="left:435.8px;top:577px;color:#202d38;-webkit-text-stroke:1.3px #202d38;transform:scale(0.935,1.028)">5</div><div class="t big dg" style="left:501.1px;top:577px;color:#202d38;-webkit-text-stroke:1.3px #202d38;transform:scale(1.01,1.028)">0</div><div class="t big dg" style="left:566.7px;top:577px;color:#202d38;-webkit-text-stroke:1.3px #202d38;transform:scale(1.005,1.028)">2</div><div class="t big dg" style="left:631.8px;top:577px;color:#202d38;-webkit-text-stroke:1.3px #202d38;transform:scale(1.005,1.028)">2</div>
<div class="t big" style="left:700.6px;top:649px;font-size:35.5px;line-height:35.5px;color:#202d38;-webkit-text-stroke:.8px #202d38;transform:scale(0.985,1.115);transform-origin:0 29px">ms</div>
<div class="w" style="left:785px;top:517px;width:290px;height:182px"></div>
<div class="abs tb" style="left:786px;top:543px;width:288px"></div>
<div class="t " style="left:793.6px;top:524px;font-size:16px;line-height:16px;color:#1c2b34;letter-spacing:0.476px;-webkit-text-stroke:.12px #1c2b34;">Hops Count</div>
<div class="t big dg" style="left:852.5px;top:577px;color:#202d38;-webkit-text-stroke:1.3px #202d38;transform:scale(1.01,1.028)">0</div>
<div class="t big" style="left:921.6px;top:649px;font-size:35.5px;line-height:35.5px;color:#202d38;-webkit-text-stroke:.8px #202d38;transform:scale(0.985,1.115);transform-origin:0 29px">hops</div>
<div class="w" style="left:1085px;top:517px;width:278px;height:182px"></div>
<div class="abs tb" style="left:1086px;top:543px;width:276px"></div>
<div class="t " style="left:1093.6px;top:524px;font-size:16px;line-height:16px;color:#1c2b34;letter-spacing:0.04px;-webkit-text-stroke:.12px #1c2b34;">Seconds Elapsed Since Last Email</div>
<svg class="abs" style="left:0;top:0;overflow:visible" width="1" height="1"><polygon points="1163.8,592.8 1163.8,678.0 1144.8,678.0 1144.8,615.1 1129.8,626.2 1120.7,614.8 1147.9,592.8" fill="#202d38"/></svg><div class="t big dg" style="left:1180.9px;top:577px;color:#202d38;-webkit-text-stroke:1.3px #202d38;transform:scale(1.015,1.028)">6</div><div class="t big dg" style="left:1245.2px;top:577px;color:#202d38;-webkit-text-stroke:1.3px #202d38;transform:scale(1.01,1.028)">0</div>
<div class="t big" style="left:1314.2px;top:649px;font-size:34px;line-height:34px;color:#202d38;-webkit-text-stroke:.8px #202d38;transform:scale(0.885,1.16);transform-origin:0 29px">s</div>
<div class="w" style="left:1373px;top:517px;width:266px;height:182px"></div>
<div class="abs" style="left:1374px;top:543px;width:264px;height:156px;background:#339b50"></div>
<div class="t " style="left:1381.6px;top:524px;font-size:16px;line-height:16px;color:#1c2b34;letter-spacing:0.231px;-webkit-text-stroke:.12px #1c2b34;">Last Check-In (seconds)</div>
<div class="t big dg" style="left:1461.8px;top:577px;color:#fff;-webkit-text-stroke:1.3px #fff;transform:scale(1.01,1.028)">0</div>
<div class="t big" style="left:1531.2px;top:649px;font-size:34px;line-height:34px;color:#fff;-webkit-text-stroke:.8px #fff;transform:scale(0.94,1.16);transform-origin:0 29px">s</div>
<div class="note" style="top:757px"></div>
<div class="t " style="left:241.1px;top:784px;font-size:24px;line-height:24px;color:#1c2b34;letter-spacing:0.272px;-webkit-text-stroke:.15px #1c2b34;">Sydney</div>
<div class="w" style="left:413px;top:709px;width:362px;height:182px"></div>
<div class="abs tb" style="left:414px;top:735px;width:360px"></div>
<div class="t " style="left:421.6px;top:716px;font-size:16px;line-height:16px;color:#1c2b34;letter-spacing:0.138px;-webkit-text-stroke:.12px #1c2b34;">Average RTT (ms)</div>
<div class="t big dg" style="left:436.8px;top:769px;color:#202d38;-webkit-text-stroke:1.3px #202d38;transform:scale(1.015,1.028)">6</div><div class="t big dg" style="left:501.1px;top:769px;color:#202d38;-webkit-text-stroke:1.3px #202d38;transform:scale(1.01,1.028)">0</div><div class="t big dg" style="left:566.7px;top:769px;color:#202d38;-webkit-text-stroke:1.3px #202d38;transform:scale(1.005,1.028)">2</div><div class="t big dg" style="left:630.1px;top:769px;color:#202d38;-webkit-text-stroke:1.3px #202d38;transform:scale(0.965,1.028)">4</div>
<div class="t big" style="left:700.6px;top:841px;font-size:35.5px;line-height:35.5px;color:#202d38;-webkit-text-stroke:.8px #202d38;transform:scale(0.985,1.115);transform-origin:0 29px">ms</div>
<div class="w" style="left:785px;top:709px;width:290px;height:182px"></div>
<div class="abs tb" style="left:786px;top:735px;width:288px"></div>
<div class="t " style="left:793.6px;top:716px;font-size:16px;line-height:16px;color:#1c2b34;letter-spacing:0.476px;-webkit-text-stroke:.12px #1c2b34;">Hops Count</div>
<div class="t big dg" style="left:852.5px;top:769px;color:#202d38;-webkit-text-stroke:1.3px #202d38;transform:scale(1.01,1.028)">0</div>
<div class="t big" style="left:921.6px;top:841px;font-size:35.5px;line-height:35.5px;color:#202d38;-webkit-text-stroke:.8px #202d38;transform:scale(0.985,1.115);transform-origin:0 29px">hops</div>
<div class="w" style="left:1085px;top:709px;width:278px;height:182px"></div>
<div class="abs tb" style="left:1086px;top:735px;width:276px"></div>
<div class="t " style="left:1093.6px;top:716px;font-size:16px;line-height:16px;color:#1c2b34;letter-spacing:0.04px;-webkit-text-stroke:.12px #1c2b34;">Seconds Elapsed Since Last Email</div>
<svg class="abs" style="left:0;top:0;overflow:visible" width="1" height="1"><polygon points="1163.8,784.8 1163.8,870.0 1144.8,870.0 1144.8,807.1 1129.8,818.2 1120.7,806.8 1147.9,784.8" fill="#202d38"/></svg><div class="t big dg" style="left:1178.9px;top:769px;color:#202d38;-webkit-text-stroke:1.3px #202d38;transform:scale(0.965,1.028)">4</div><div class="t big dg" style="left:1246.0px;top:769px;color:#202d38;-webkit-text-stroke:1.3px #202d38;transform:scale(1.015,1.028)">9</div>
<div class="t big" style="left:1314.2px;top:841px;font-size:34px;line-height:34px;color:#202d38;-webkit-text-stroke:.8px #202d38;transform:scale(0.885,1.16);transform-origin:0 29px">s</div>
<div class="w" style="left:1373px;top:709px;width:266px;height:182px"></div>
<div class="abs" style="left:1374px;top:735px;width:264px;height:156px;background:#339b50"></div>
<div class="t " style="left:1381.6px;top:716px;font-size:16px;line-height:16px;color:#1c2b34;letter-spacing:0.231px;-webkit-text-stroke:.12px #1c2b34;">Last Check-In (seconds)</div>
<div class="t big dg" style="left:1461.8px;top:769px;color:#fff;-webkit-text-stroke:1.3px #fff;transform:scale(1.01,1.028)">0</div>
<div class="t big" style="left:1531.2px;top:841px;font-size:34px;line-height:34px;color:#fff;-webkit-text-stroke:.8px #fff;transform:scale(0.94,1.16);transform-origin:0 29px">s</div>
<div class="note" style="top:949px"></div>
<div class="t " style="left:247.7px;top:976px;font-size:24px;line-height:24px;color:#1c2b34;letter-spacing:1.104px;-webkit-text-stroke:.15px #1c2b34;">Tokyo</div>
<div class="w" style="left:413px;top:901px;width:362px;height:182px"></div>
<div class="abs tb" style="left:414px;top:927px;width:360px"></div>
<div class="t " style="left:421.6px;top:908px;font-size:16px;line-height:16px;color:#1c2b34;letter-spacing:0.138px;-webkit-text-stroke:.12px #1c2b34;">Average RTT (ms)</div>
<div class="t big dg" style="left:435.8px;top:961px;color:#202d38;-webkit-text-stroke:1.3px #202d38;transform:scale(0.935,1.028)">5</div><div class="t big dg" style="left:499.9px;top:961px;color:#202d38;-webkit-text-stroke:1.3px #202d38;transform:scale(0.965,1.028)">4</div><div class="t big dg" style="left:566.7px;top:961px;color:#202d38;-webkit-text-stroke:1.3px #202d38;transform:scale(0.98,1.028)">3</div><div class="t big dg" style="left:630.1px;top:961px;color:#202d38;-webkit-text-stroke:1.3px #202d38;transform:scale(0.965,1.028)">4</div>
<div class="t big" style="left:700.6px;top:1033px;font-size:35.5px;line-height:35.5px;color:#202d38;-webkit-text-stroke:.8px #202d38;transform:scale(0.985,1.115);transform-origin:0 29px">ms</div>
<div class="w" style="left:785px;top:901px;width:290px;height:182px"></div>
<div class="abs tb" style="left:786px;top:927px;width:288px"></div>
<div class="t " style="left:793.6px;top:908px;font-size:16px;line-height:16px;color:#1c2b34;letter-spacing:0.476px;-webkit-text-stroke:.12px #1c2b34;">Hops Count</div>
<div class="t big dg" style="left:852.5px;top:961px;color:#202d38;-webkit-text-stroke:1.3px #202d38;transform:scale(1.01,1.028)">0</div>
<div class="t big" style="left:921.6px;top:1033px;font-size:35.5px;line-height:35.5px;color:#202d38;-webkit-text-stroke:.8px #202d38;transform:scale(0.985,1.115);transform-origin:0 29px">hops</div>
<div class="w" style="left:1085px;top:901px;width:278px;height:182px"></div>
<div class="abs tb" style="left:1086px;top:927px;width:276px"></div>
<div class="t " style="left:1093.6px;top:908px;font-size:16px;line-height:16px;color:#1c2b34;letter-spacing:0.04px;-webkit-text-stroke:.12px #1c2b34;">Seconds Elapsed Since Last Email</div>
<svg class="abs" style="left:0;top:0;overflow:visible" width="1" height="1"><polygon points="1163.8,976.8 1163.8,1062.0 1144.8,1062.0 1144.8,999.1 1129.8,1010.2 1120.7,998.8 1147.9,976.8" fill="#202d38"/></svg><div class="t big dg" style="left:1180.9px;top:961px;color:#202d38;-webkit-text-stroke:1.3px #202d38;transform:scale(1.015,1.028)">6</div><div class="t big dg" style="left:1245.2px;top:961px;color:#202d38;-webkit-text-stroke:1.3px #202d38;transform:scale(1.01,1.028)">0</div>
<div class="t big" style="left:1314.2px;top:1033px;font-size:34px;line-height:34px;color:#202d38;-webkit-text-stroke:.8px #202d38;transform:scale(0.885,1.16);transform-origin:0 29px">s</div>
<div class="w" style="left:1373px;top:901px;width:266px;height:182px"></div>
<div class="abs" style="left:1374px;top:927px;width:264px;height:156px;background:#339b50"></div>
<div class="t " style="left:1381.6px;top:908px;font-size:16px;line-height:16px;color:#1c2b34;letter-spacing:0.231px;-webkit-text-stroke:.12px #1c2b34;">Last Check-In (seconds)</div>
<div class="t big dg" style="left:1461.8px;top:961px;color:#fff;-webkit-text-stroke:1.3px #fff;transform:scale(1.01,1.028)">0</div>
<div class="t big" style="left:1531.2px;top:1033px;font-size:34px;line-height:34px;color:#fff;-webkit-text-stroke:.8px #fff;transform:scale(0.94,1.16);transform-origin:0 29px">s</div>
</body>
</html>
